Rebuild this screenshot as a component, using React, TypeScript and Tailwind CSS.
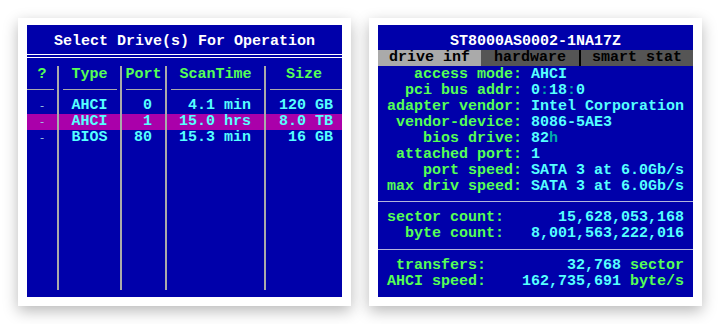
import React from 'react';

const font = { fontFamily: '"Liberation Mono", "DejaVu Sans Mono", monospace' };

const drives = [
  { type: 'AHCI', port: '0', scan: '4.1 min', size: '120 GB', sel: false },
  { type: 'AHCI', port: '1', scan: '15.0 hrs', size: '8.0 TB', sel: true },
  { type: 'BIOS', port: '80', scan: '15.3 min', size: '16 GB', sel: false },
];

const Sep = () => <div className="bg-[#aaaaaa]" />;

function DriveTable() {
  return (
    <div className="flex h-[272px] w-[315px] flex-col bg-[#0000aa]">
      <div className="h-[29px] pt-[9px] text-center leading-[16px] text-white">Select Drive(s) For Operation</div>
      <div className="h-[4px] border-y border-white" />
      <div className="h-[8px]" />
      <div className="grid h-[32px] grid-cols-[30px_2px_61px_2px_43px_2px_97px_2px_76px] text-[#55ff55]">
        <div className="flex flex-col">
          <div className="h-[16px] pt-px text-center leading-[16px]">?</div>
          <div className="mt-[7px] mr-[3px] h-px bg-[#aaaaaa]" />
        </div>
        <Sep />
        <div className="flex flex-col">
          <div className="h-[16px] pt-px text-center leading-[16px]">Type</div>
          <div className="mt-[7px] ml-[4px] mr-[3px] h-px bg-[#aaaaaa]" />
        </div>
        <Sep />
        <div className="flex flex-col">
          <div className="h-[16px] pt-px text-center leading-[16px]">Port</div>
          <div className="mt-[7px] ml-[4px] mr-[3px] h-px bg-[#aaaaaa]" />
        </div>
        <Sep />
        <div className="flex flex-col">
          <div className="h-[16px] pt-px text-center leading-[16px]">ScanTime</div>
          <div className="mt-[7px] ml-[4px] mr-[3px] h-px bg-[#aaaaaa]" />
        </div>
        <Sep />
        <div className="flex flex-col">
          <div className="h-[16px] pt-px text-center leading-[16px]">Size</div>
          <div className="mt-[7px] ml-[4px] h-px bg-[#aaaaaa]" />
        </div>
      </div>
      {drives.map((d) => (
        <div
          key={d.port}
          className={`grid h-[16px] grid-cols-[30px_2px_61px_2px_43px_2px_97px_2px_76px] leading-[16px] text-[#55ffff] ${d.sel ? 'bg-[#aa00aa]' : ''}`}
        >
          <div className="text-center text-[11px] font-normal text-[#9fc7e0]">-</div>
          <Sep />
          <div className="text-center">{d.type}</div>
          <Sep />
          <div className="pr-[13px] text-right">{d.port}</div>
          <Sep />
          <div className="pr-[13px] text-right">{d.scan}</div>
          <Sep />
          <div className="pr-[9px] text-right">{d.size}</div>
        </div>
      ))}
      <div className="grid flex-1 grid-cols-[30px_2px_61px_2px_43px_2px_97px_2px_76px]">
        <div />
        <Sep />
        <div />
        <Sep />
        <div />
        <Sep />
        <div />
        <Sep />
        <div />
      </div>
      <div className="h-[7px]" />
    </div>
  );
}

const info: [string, React.ReactNode][] = [
  ['access mode:', 'AHCI'],
  ['pci bus addr:', <>0<span className="text-[#00aaaa]">:</span>18<span className="text-[#00aaaa]">:</span>0</>],
  ['adapter vendor:', 'Intel Corporation'],
  ['vendor-device:', '8086-5AE3'],
  ['bios drive:', <>82<span className="text-[#00aaaa]">h</span></>],
  ['attached port:', '1'],
  ['port speed:', 'SATA 3 at 6.0Gb/s'],
  ['max driv speed:', 'SATA 3 at 6.0Gb/s'],
];

function DriveInfo() {
  return (
    <div className="flex h-[272px] w-[315px] flex-col bg-[#0000aa] leading-[16px]">
      <div className="h-[25px] pt-[9px] text-center text-white">ST8000AS0002-1NA17Z</div>
      <div className="flex h-[16px] text-black">
        <div className="w-[103px] bg-[#aaaaaa] text-center">drive inf</div>
        <div className="w-[98px] bg-[#555555] text-center">hardware</div>
        <div className="w-[2px] bg-black" />
        <div className="flex-1 bg-[#555555] text-center">smart stat</div>
      </div>
      <div className="flex flex-col">
        {info.map(([k, v]) => (
          <div key={k} className="flex h-[16px] pt-px">
            <div className="w-[144px] text-right text-[#55ff55]">{k}</div>
            <div className="ml-[9px] text-[#55ffff]">{v}</div>
          </div>
        ))}
      </div>
      <div className="mt-[7px] h-px bg-[#b4b4dc]" />
      <div className="mt-[7px] flex flex-col">
        <div className="flex h-[16px] pt-px">
          <div className="w-[126px] text-right text-[#55ff55]">sector count:</div>
          <div className="flex-1 pr-[9px] text-right text-[#55ffff]">15,628,053,168</div>
        </div>
        <div className="flex h-[16px] pt-px">
          <div className="w-[126px] text-right text-[#55ff55]">byte count:</div>
          <div className="flex-1 pr-[9px] text-right text-[#55ffff]">8,001,563,222,016</div>
        </div>
      </div>
      <div className="mt-[8px] h-px bg-[#b4b4dc]" />
      <div className="mt-[7px] flex flex-col">
        <div className="flex h-[16px] pt-px">
          <div className="w-[108px] text-right text-[#55ff55]">transfers:</div>
          <div className="flex-1 pr-[9px] text-right text-[#55ffff]">
            32,768 <span className="text-[#55ff55]">sector</span>
          </div>
        </div>
        <div className="flex h-[16px] pt-px">
          <div className="w-[108px] text-right text-[#55ff55]">AHCI speed:</div>
          <div className="flex-1 pr-[9px] text-right text-[#55ffff]">
            162,735,691 <span className="text-[#55ff55]">byte/s</span>
          </div>
        </div>
      </div>
    </div>
  );
}

export default function App() {
  return (
    <div
      className="flex h-[324px] w-[720px] gap-[18px] bg-white p-[18px] text-[15px] font-bold whitespace-pre"
      style={font}
    >
      <div className="bg-white px-[9px] pt-[7px] pb-[9px] shadow-[0_5px_14px_rgba(0,0,0,0.28)]">
        <DriveTable />
      </div>
      <div className="bg-white px-[9px] pt-[7px] pb-[9px] shadow-[0_5px_14px_rgba(0,0,0,0.28)]">
        <DriveInfo />
      </div>
    </div>
  );
}
